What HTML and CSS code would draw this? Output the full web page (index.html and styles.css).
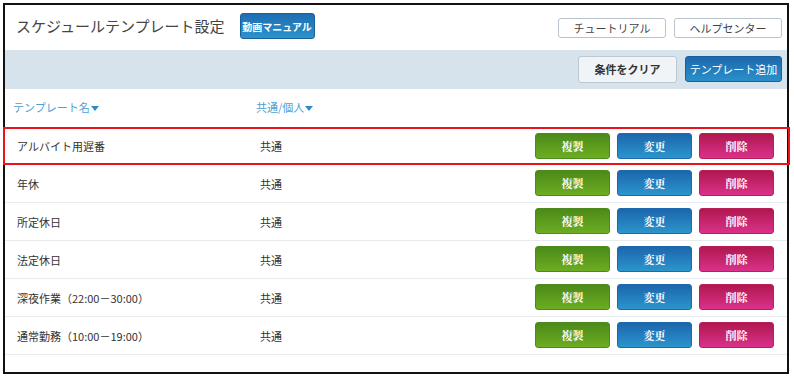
FILE: index.html
```html
<!DOCTYPE html>
<html lang="ja">
<head>
<meta charset="utf-8">
<link rel="stylesheet" href="styles.css">
</head>
<body>
<div class="frame">
  <div class="topbar">
    <h1 class="title">スケジュールテンプレート設定</h1>
    <button class="btn-manual">動画マニュアル</button>
    <div class="spacer"></div>
    <button class="btn-outline">チュートリアル</button>
    <button class="btn-outline">ヘルプセンター</button>
  </div>
  <div class="toolbar">
    <button class="btn-clear">条件をクリア</button>
    <button class="btn-add">テンプレート追加</button>
  </div>
  <div class="thead">
    <div class="col-name">テンプレート名<span class="tri"></span></div>
    <div class="col-type">共通/個人<span class="tri"></span></div>
  </div>
  <div class="row selected">
    <div class="col-name">アルバイト用遅番</div>
    <div class="col-type">共通</div>
    <div class="actions"><button class="b green">複製</button><button class="b blue">変更</button><button class="b pink">削除</button></div>
  </div>
  <div class="row">
    <div class="col-name">年休</div>
    <div class="col-type">共通</div>
    <div class="actions"><button class="b green">複製</button><button class="b blue">変更</button><button class="b pink">削除</button></div>
  </div>
  <div class="row">
    <div class="col-name">所定休日</div>
    <div class="col-type">共通</div>
    <div class="actions"><button class="b green">複製</button><button class="b blue">変更</button><button class="b pink">削除</button></div>
  </div>
  <div class="row">
    <div class="col-name">法定休日</div>
    <div class="col-type">共通</div>
    <div class="actions"><button class="b green">複製</button><button class="b blue">変更</button><button class="b pink">削除</button></div>
  </div>
  <div class="row">
    <div class="col-name">深夜作業（22:00－30:00）</div>
    <div class="col-type">共通</div>
    <div class="actions"><button class="b green">複製</button><button class="b blue">変更</button><button class="b pink">削除</button></div>
  </div>
  <div class="row">
    <div class="col-name">通常勤務（10:00－19:00）</div>
    <div class="col-type">共通</div>
    <div class="actions"><button class="b green">複製</button><button class="b blue">変更</button><button class="b pink">削除</button></div>
  </div>
</div>
</body>
</html>
```

FILE: styles.css
```css
* { box-sizing: border-box; }
html, body { margin: 0; padding: 0; background: #fff; }
body {
  font-family: "Noto Sans CJK JP", "Noto Sans", sans-serif;
  color: #333;
  width: 794px;
  height: 378px;
  overflow: hidden;
}
button { font-family: inherit; cursor: pointer; margin: 0; }
.frame {
  margin: 3px 0 0 3px;
  width: 786px;
  height: 371px;
  border: 2px solid #111;
  background: #fff;
  position: relative;
}
.topbar {
  height: 45px;
  display: flex;
  align-items: center;
  padding: 0 5px 0 11px;
}
.title {
  margin: 0;
  font-size: 15px;
  font-weight: normal;
  color: #444;
  line-height: 1;
  margin-top: -4px;
}
.btn-manual {
  margin-left: 15px;
  width: 75px;
  height: 26px;
  border: 1px solid #1a5f9a;
  border-radius: 3px;
  background: linear-gradient(#1e6db2, #2a93cc);
  color: #fff;
  font-size: 10px;
  font-weight: bold;
  padding: 0;
  margin-top: -3px;
}
.spacer { flex: 1; }
.btn-outline {
  width: 108px;
  height: 20px;
  margin-left: 8px;
  border: 1px solid #b8c2cc;
  border-radius: 3px;
  background: #fff;
  color: #444;
  font-size: 11px;
  padding: 0;
}
.toolbar {
  height: 39px;
  background: #d6e3ec;
  display: flex;
  justify-content: flex-end;
  align-items: center;
  gap: 8px;
  padding: 0 5px 1px 0;
}
.btn-clear {
  width: 99px;
  height: 27px;
  border: 1px solid #bcc8d2;
  border-radius: 3px;
  background: #f1f4f7;
  color: #333;
  font-size: 11px;
  font-weight: bold;
  padding: 0;
}
.btn-add {
  width: 97px;
  height: 26px;
  border: 1px solid #1a5f9a;
  border-radius: 3px;
  background: linear-gradient(#1e68ad, #2a90c9);
  color: #fff;
  font-size: 11px;
  padding: 0;
}
.thead {
  height: 38px;
  display: flex;
  align-items: center;
  padding-left: 8px;
  font-size: 11px;
  color: #4fa0d4;
  padding-bottom: 3px;
}
.thead .col-name { width: 243px; }
.tri {
  display: inline-block;
  width: 0; height: 0;
  border-left: 4px solid transparent;
  border-right: 4px solid transparent;
  border-top: 5px solid #2e8bc8;
  margin-left: 1px;
  vertical-align: 1px;
}
.row {
  height: 38px;
  display: flex;
  align-items: center;
  padding-left: 12px;
  font-size: 11px;
  color: #333;
  border-bottom: 1px solid #e6ebf0;
}
.row .col-name { width: 243px; }
.row .col-type { flex: 1; }
.row.selected {
  border-bottom: none;
  position: relative;
}
.row.selected::after {
  content: "";
  position: absolute;
  left: -2px;
  right: -3px;
  top: 0;
  bottom: 0;
  border: 2px solid #e8141c;
  pointer-events: none;
}
.actions {
  display: flex;
  gap: 7px;
  padding-right: 13px;
  margin-top: -1px;
}
.b {
  width: 75px;
  height: 26px;
  border-radius: 3px;
  color: #fff;
  font-size: 11px;
  font-weight: bold;
  font-family: "Noto Serif CJK JP", "Noto Sans CJK JP", serif;
  padding: 0;
}
.green { border: 1px solid #4d8a1e; background: linear-gradient(#4b8a19, #6cad22); }
.blue { border: 1px solid #1e69ad; background: linear-gradient(#1c66ad, #2b95cc); }
.pink { border: 1px solid #b81f5a; background: linear-gradient(#b0184f, #da318b); }
```
